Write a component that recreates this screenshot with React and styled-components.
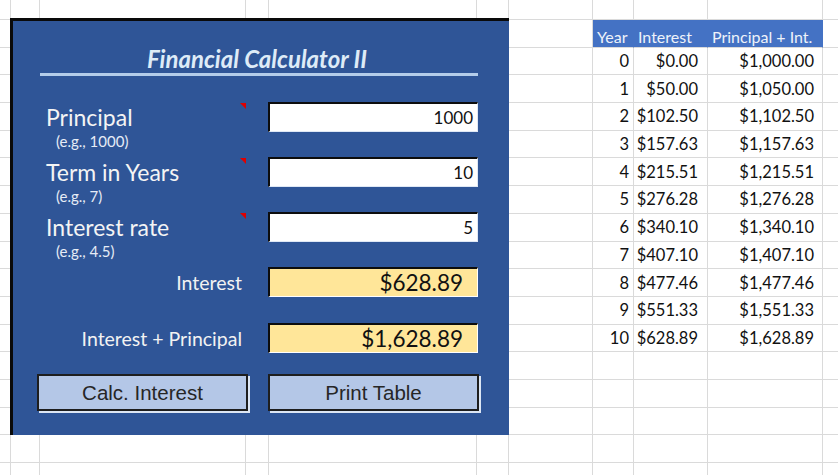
import styled, { createGlobalStyle } from 'styled-components';

const GlobalStyle = createGlobalStyle`
  html, body {
    margin: 0;
    padding: 0;
    background: #fff;
  }
  body {
    width: 838px;
    height: 475px;
    overflow: hidden;
  }
`;

// spreadsheet column widths (A..K) and row height
const COLS = [11, 29, 206, 23, 208, 32, 84, 41, 74, 115, 60];
const ROW_H = 27.7;
const ROW_COUNT = 18;

const Sheet = styled.div`
  position: relative;
  width: 838px;
  height: 475px;
  overflow: hidden;
  display: grid;
  grid-template-columns: ${COLS.map((c) => c + 'px').join(' ')};
  grid-template-rows: 20px repeat(${ROW_COUNT - 1}, ${ROW_H}px);
  font-family: Lato, 'Open Sans', sans-serif;
`;

const Cell = styled.div`
  box-sizing: border-box;
  border-right: 1px solid ${(p) => (p.$head ? '#4472C4' : '#DADADA')};
  border-bottom: 1px solid #dadada;
  background: ${(p) => (p.$head ? '#4472C4' : '#fff')};
  color: ${(p) => (p.$head ? '#EEF2FA' : '#111')};
  font-size: ${(p) => (p.$head ? 16 : 16.5)}px;
  display: flex;
  align-items: ${(p) => (p.$head ? 'flex-end' : 'center')};
  justify-content: ${(p) => (p.$head ? 'flex-start' : 'flex-end')};
  padding: ${(p) => (p.$head ? '0 0 1px 4px' : `0 ${p.$pad || 0}px 0 0`)};
  white-space: nowrap;
  overflow: hidden;
`;

const Panel = styled.section`
  position: absolute;
  left: 10px;
  top: 18px;
  width: 499px;
  height: 417px;
  box-sizing: border-box;
  background: #2f5597;
  border-top: 3px solid #0a0a0a;
  border-left: 3px solid #0a0a0a;
  padding: 24px 0 0 27px;
  display: flex;
  flex-direction: column;
  font-family: Lato, 'Open Sans', sans-serif;
`;

const Title = styled.h1`
  margin: 0;
  width: 438px;
  text-align: center;
  font-size: 24px;
  font-weight: 700;
  font-style: italic;
  line-height: 28px;
  color: #deebf7;
  padding-right: 4px;
  box-sizing: border-box;
`;

const Rule = styled.div`
  width: 438px;
  height: 3px;
  background: #b4cdea;
  margin-bottom: 26px;
`;

const Field = styled.div`
  display: grid;
  grid-template-columns: 206px 22px 210px;
  height: ${(p) => p.$h || 55}px;
`;

const LabelCell = styled.div`
  position: relative;
  grid-column: 1;
  display: flex;
  flex-direction: column;
  align-items: ${(p) => (p.$right ? 'flex-end' : 'flex-start')};
`;

const Label = styled.div`
  font-size: 23px;
  line-height: 30px;
  color: #f4f4f4;
  padding-left: 6px;
`;

const Hint = styled.div`
  font-size: 15px;
  line-height: 18px;
  color: #e6ecf6;
  padding-left: 16px;
`;

const ResultLabel = styled.div`
  font-size: 19.5px;
  line-height: 32px;
  color: #f2f2f2;
  padding-right: 4px;
`;

const Marker = styled.span`
  position: absolute;
  top: 1px;
  right: 0;
  width: 0;
  height: 0;
  border-top: 6px solid #e00000;
  border-left: 6px solid transparent;
`;

const Box = styled.div`
  grid-column: 3;
  height: 30px;
  box-sizing: border-box;
  border-top: 2px solid #0d0d0d;
  border-left: 2px solid #0d0d0d;
  border-right: 1.5px solid ${(p) => (p.$result ? '#fff' : '#dfe8f5')};
  border-bottom: 1.5px solid ${(p) => (p.$result ? '#fff' : '#dfe8f5')};
  background: ${(p) => (p.$result ? '#FFE699' : '#fff')};
  color: #111;
  font-size: ${(p) => (p.$result ? 22.5 : 17)}px;
  line-height: 27px;
  text-align: right;
  padding-right: ${(p) => (p.$result ? 14 : 4)}px;
`;

const Buttons = styled.div`
  display: grid;
  grid-template-columns: 211px 211px;
  column-gap: 20px;
  margin: 21px 0 0 -3px;
`;

const Button = styled.button`
  height: 37px;
  box-sizing: border-box;
  background: #b4c7e7;
  border: 2px solid #1e1e1e;
  box-shadow: 2px 2px 0 #dce6f4;
  font-family: 'Liberation Sans', Arial, sans-serif;
  font-size: 20.5px;
  color: #262626;
  padding: 0;
  cursor: pointer;
`;

const inputs = [
  { label: 'Principal', hint: '(e.g., 1000)', value: '1000' },
  { label: 'Term in Years', hint: '(e.g., 7)', value: '10' },
  { label: 'Interest rate', hint: '(e.g., 4.5)', value: '5' },
];

const money = (v) =>
  '$' + v.toLocaleString('en-US', { minimumFractionDigits: 2, maximumFractionDigits: 2 });

const principal = 1000;
const rate = 0.05;
const schedule = Array.from({ length: 11 }, (_, year) => {
  const total = principal * Math.pow(1 + rate, year);
  return { year, interest: total - principal, total };
});

const HEAD_ROW = 1;
const FIRST_COL = 7;

function cellContent(r, c) {
  const headers = ['Year', 'Interest', 'Principal + Int.'];
  if (c < FIRST_COL || c > FIRST_COL + 2) return null;
  if (r === HEAD_ROW) return { head: true, text: headers[c - FIRST_COL] };
  const row = schedule[r - HEAD_ROW - 1];
  if (!row) return null;
  if (c === FIRST_COL) return { text: String(row.year), pad: 4 };
  if (c === FIRST_COL + 1) return { text: money(row.interest), pad: 9 };
  return { text: money(row.total), pad: 8 };
}

const App = () => {
  const last = schedule[schedule.length - 1];

  return (
    <>
      <GlobalStyle />
      <Sheet>
        {Array.from({ length: ROW_COUNT }, (_, r) =>
          COLS.map((_, c) => {
            const content = cellContent(r, c);
            return (
              <Cell key={`${r}-${c}`} $head={content?.head} $pad={content?.pad}>
                {content?.text}
              </Cell>
            );
          })
        )}

        <Panel>
          <Title>Financial Calculator II</Title>
          <Rule />

          {inputs.map((f) => (
            <Field key={f.label}>
              <LabelCell>
                <Label>{f.label}</Label>
                <Hint>{f.hint}</Hint>
                <Marker />
              </LabelCell>
              <Box>{f.value}</Box>
            </Field>
          ))}

          <Field $h={56}>
            <LabelCell $right>
              <ResultLabel>Interest</ResultLabel>
            </LabelCell>
            <Box $result>{money(last.interest)}</Box>
          </Field>

          <Field $h={30}>
            <LabelCell $right>
              <ResultLabel>Interest + Principal</ResultLabel>
            </LabelCell>
            <Box $result>{money(last.total)}</Box>
          </Field>

          <Buttons>
            <Button type="button">Calc. Interest</Button>
            <Button type="button">Print Table</Button>
          </Buttons>
        </Panel>
      </Sheet>
    </>
  );
};

export default App;
